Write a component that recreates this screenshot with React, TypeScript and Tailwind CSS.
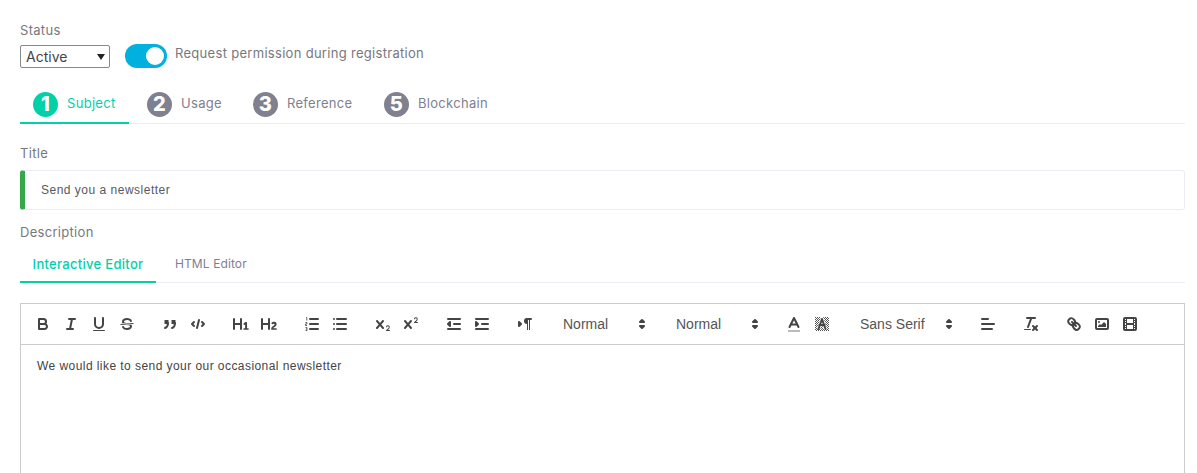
import type { ReactNode } from 'react'

const sf = 'fill-[#444] stroke-none'
const st = 'fill-none stroke-[#444] stroke-2 [stroke-linecap:round] [stroke-linejoin:round]'

function Ico({ children }: { children: ReactNode }) {
  return (
    <span className="flex h-6 w-7 shrink-0 items-center justify-center">
      <svg viewBox="0 0 18 18" className="h-[18px] w-[18px]">{children}</svg>
    </span>
  )
}

function Group({ children }: { children: ReactNode }) {
  return <div className="mr-[15px] flex shrink-0 items-center">{children}</div>
}

function Picker({ label, width }: { label: string; width: string }) {
  return (
    <div className={`mr-[15px] flex h-6 shrink-0 items-center justify-between pl-[9px] pr-px ${width}`}>
      <span className="font-['Liberation_Sans',sans-serif] text-sm tracking-normal text-[#555]">{label}</span>
      <svg viewBox="0 0 18 18" className="h-[18px] w-[18px]">
        <polygon className={st} points="7 11 9 13 11 11 7 11" />
        <polygon className={st} points="7 7 9 5 11 7 7 7" />
      </svg>
    </div>
  )
}

function Toolbar() {
  return (
    <div className="flex h-[42px] items-center border border-[#ccc] pl-2">
      <Group>
        <Ico>
          <path className={st} d="M5,4H9.5A2.5,2.5,0,0,1,12,6.5v0A2.5,2.5,0,0,1,9.5,9H5A0,0,0,0,1,5,9V4A0,0,0,0,1,5,4Z" />
          <path className={st} d="M5,9h5.5A2.5,2.5,0,0,1,13,11.5v0A2.5,2.5,0,0,1,10.5,14H5a0,0,0,0,1,0,0V9A0,0,0,0,1,5,9Z" />
        </Ico>
        <Ico>
          <line className={st} x1="7" x2="13" y1="4" y2="4" />
          <line className={st} x1="5" x2="11" y1="14" y2="14" />
          <line className={st} x1="8" x2="10" y1="14" y2="4" />
        </Ico>
        <Ico>
          <path className={st} d="M5,3V9a4.012,4.012,0,0,0,4,4H9a4.012,4.012,0,0,0,4-4V3" />
          <rect className={sf} height="1" rx=".5" ry=".5" width="12" x="3" y="15" />
        </Ico>
        <Ico>
          <line className="fill-none stroke-[#444] stroke-1" x1="15.5" x2="2.5" y1="8.5" y2="9.5" />
          <path className={sf} d="M9.007,8C6.542,7.791,6,7.519,6,6.5,6,5.792,7.283,5,9,5c1.571,0,2.765.679,2.969,1.309a1,1,0,0,0,1.9-.617C13.356,4.106,11.354,3,9,3,6.2,3,4,4.538,4,6.5a3.2,3.2,0,0,0,.5,1.843Z" />
          <path className={sf} d="M8.984,10C11.457,10.208,12,10.479,12,11.5c0,.708-1.283,1.5-3,1.5-1.571,0-2.765-.679-2.969-1.309a1,1,0,1,0-1.9.617C4.644,13.894,6.646,15,9,15c2.8,0,5-1.538,5-3.5a3.2,3.2,0,0,0-.5-1.843Z" />
        </Ico>
      </Group>
      <Group>
        <Ico>
          <rect className={sf} height="4" width="4" x="3.5" y="5" />
          <rect className={sf} height="4" width="4" x="10.5" y="5" />
          <path className={st} d="M7,8c0,4.031-3,5-3,5" />
          <path className={st} d="M14,8c0,4.031-3,5-3,5" />
        </Ico>
        <Ico>
          <polyline className={st} points="5 7 3 9 5 11" />
          <polyline className={st} points="13 7 15 9 13 11" />
          <line className={st} x1="10" x2="8" y1="5" y2="13" />
        </Ico>
      </Group>
      <Group>
        <Ico>
          <path className={sf} d="M10,4V14a1,1,0,0,1-2,0V10H3v4a1,1,0,0,1-2,0V4A1,1,0,0,1,3,4V8H8V4a1,1,0,0,1,2,0Zm6.06787,9.209H14.98975V7.59863a.54085.54085,0,0,0-.605-.60547h-.62744a1.01119,1.01119,0,0,0-.748.29688L11.645,8.56641a.5435.5435,0,0,0-.022.8584l.28613.30762a.53861.53861,0,0,0,.84717.0332l.09912-.08789a1.2137,1.2137,0,0,0,.2417-.35254h.02246s-.01123.30859-.01123.60547V13.209H12.041a.54085.54085,0,0,0-.605.60547v.43945a.54085.54085,0,0,0,.605.60547h4.02686a.54085.54085,0,0,0,.605-.60547v-.43945A.54085.54085,0,0,0,16.06787,13.209Z" />
        </Ico>
        <Ico>
          <path className={sf} d="M16.73975,13.81445v.43945a.54085.54085,0,0,1-.605.60547H11.855a.58392.58392,0,0,1-.64893-.60547V14.0127c0-2.90527,3.39941-3.42187,3.39941-4.55469a.77675.77675,0,0,0-.84717-.78125,1.17684,1.17684,0,0,0-.83594.38477c-.2749.26367-.561.374-.85791.13184l-.4292-.34082c-.30811-.24219-.38525-.51758-.1543-.81445a2.97155,2.97155,0,0,1,2.45361-1.17676,2.45393,2.45393,0,0,1,2.68408,2.40918c0,2.45312-3.1792,2.92676-3.27832,3.93848h2.79443A.54085.54085,0,0,1,16.73975,13.81445ZM9,3A.99974.99974,0,0,0,8,4V8H3V4A1,1,0,0,0,1,4V14a1,1,0,0,0,2,0V10H8v4a1,1,0,0,0,2,0V4A.99974.99974,0,0,0,9,3Z" />
        </Ico>
      </Group>
      <Group>
        <Ico>
          <line className={st} x1="7" x2="15" y1="4" y2="4" />
          <line className={st} x1="7" x2="15" y1="9" y2="9" />
          <line className={st} x1="7" x2="15" y1="14" y2="14" />
          <path className="fill-none stroke-[#444] stroke-[0.8]" d="M3,2.5h.8v3M2.5,7.5h1.5v1.5h-1.5v1.5h1.5M2.5,12.5h1.5v3h-1.5M2.8,14h1.2" />
        </Ico>
        <Ico>
          <line className={st} x1="6" x2="15" y1="4" y2="4" />
          <line className={st} x1="6" x2="15" y1="9" y2="9" />
          <line className={st} x1="6" x2="15" y1="14" y2="14" />
          <line className={st} x1="3" x2="3" y1="4" y2="4" />
          <line className={st} x1="3" x2="3" y1="9" y2="9" />
          <line className={st} x1="3" x2="3" y1="14" y2="14" />
        </Ico>
      </Group>
      <Group>
        <Ico>
          <path className={sf} d="M15.5,15H13.861a3.858,3.858,0,0,0,1.914-2.975,1.8,1.8,0,0,0-1.6-1.751A1.921,1.921,0,0,0,12.021,11.7a0.50013,0.50013,0,1,0,.957.291h0a0.914,0.914,0,0,1,1.053-.725,0.81,0.81,0,0,1,.744.762c0,1.076-1.16971,1.86982-1.93971,2.43082A1.45639,1.45639,0,0,0,12,15.5a0.5,0.5,0,0,0,.5.5h3A0.5,0.5,0,0,0,15.5,15Z" />
          <path className={sf} d="M9.65,5.241a1,1,0,0,0-1.409.108L6,7.964,3.759,5.349A1,1,0,0,0,2.192,6.59178Q2.21541,6.6213,2.241,6.649L4.684,9.5,2.241,12.35A1,1,0,0,0,3.71,13.70722q0.02557-.02768.049-0.05722L6,11.036,8.241,13.65a1,1,0,1,0,1.567-1.24277Q9.78459,12.3777,9.759,12.35L7.316,9.5,9.759,6.651A1,1,0,0,0,9.65,5.241Z" />
        </Ico>
        <Ico>
          <path className={sf} d="M15.5,7H13.861a4.015,4.015,0,0,0,1.914-2.975,1.8,1.8,0,0,0-1.6-1.751A1.922,1.922,0,0,0,12.021,3.7a0.5,0.5,0,1,0,.957.291,0.917,0.917,0,0,1,1.053-.725,0.81,0.81,0,0,1,.744.762c0,1.077-1.164,1.925-1.934,2.486A1.423,1.423,0,0,0,12,7.5a0.5,0.5,0,0,0,.5.5h3A0.5,0.5,0,0,0,15.5,7Z" />
          <path className={sf} d="M9.651,5.241a1,1,0,0,0-1.41.108L6,7.964,3.759,5.349a1,1,0,1,0-1.519,1.3L4.683,9.5,2.241,12.35a1,1,0,1,0,1.519,1.3L6,11.036,8.241,13.65a1,1,0,0,0,1.519-1.3L7.317,9.5,9.759,6.651A1,1,0,0,0,9.651,5.241Z" />
        </Ico>
      </Group>
      <Group>
        <Ico>
          <line className={st} x1="3" x2="15" y1="14" y2="14" />
          <line className={st} x1="3" x2="15" y1="4" y2="4" />
          <line className={st} x1="9" x2="15" y1="9" y2="9" />
          <polyline className={`${st} fill-[#444]`} points="5 7 5 11 3 9 5 7" />
        </Ico>
        <Ico>
          <line className={st} x1="3" x2="15" y1="14" y2="14" />
          <line className={st} x1="3" x2="15" y1="4" y2="4" />
          <line className={st} x1="9" x2="15" y1="9" y2="9" />
          <polyline className={`${st} fill-[#444]`} points="3 7 3 11 5 9 3 7" />
        </Ico>
      </Group>
      <Group>
        <Ico>
          <polygon className={`${st} fill-[#444]`} points="3 11 5 9 3 7 3 11" />
          <line className={st} x1="15" x2="11" y1="4" y2="4" />
          <path className={sf} d="M11,3a3,3,0,0,0,0,6h1V3H11Z" />
          <rect className={sf} height="11" width="1" x="11" y="4" />
          <rect className={sf} height="11" width="1" x="13" y="4" />
        </Ico>
      </Group>
      <Picker label="Normal" width="w-[98px]" />
      <Picker label="Normal" width="w-[98px]" />
      <Group>
        <Ico>
          <line className="fill-none stroke-[#bbb] stroke-2" x1="3" x2="15" y1="16" y2="16" />
          <polyline className={st} points="4.5 12 9 3 13.5 12" />
          <line className={st} x1="12" x2="6" y1="9.5" y2="9.5" />
        </Ico>
        <Ico>
          <defs>
            <pattern id="dots" width="2" height="2" patternUnits="userSpaceOnUse">
              <rect width="1" height="1" fill="#555" />
              <rect x="1" y="1" width="1" height="1" fill="#555" />
            </pattern>
          </defs>
          <rect x="2" y="2" width="14" height="14" fill="url(#dots)" />
          <polyline className="fill-none stroke-white stroke-[3.5]" points="5.5 14 9 4 12.5 14" />
          <polyline className={st} points="5.5 14 9 4 12.5 14" />
          <line className={st} x1="11.63" x2="6.38" y1="10" y2="10" />
        </Ico>
      </Group>
      <Picker label="Sans Serif" width="w-[108px]" />
      <Group>
        <Ico>
          <line className={st} x1="3" x2="15" y1="9" y2="9" />
          <line className={st} x1="3" x2="13" y1="14" y2="14" />
          <line className={st} x1="3" x2="9" y1="4" y2="4" />
        </Ico>
      </Group>
      <Group>
        <Ico>
          <line className={st} x1="5" x2="13" y1="3" y2="3" />
          <line className={st} x1="6" x2="9.35" y1="12" y2="3" />
          <line className={st} x1="11" x2="15" y1="11" y2="15" />
          <line className={st} x1="15" x2="11" y1="11" y2="15" />
          <rect className={sf} height="1" rx=".5" ry=".5" width="7" x="2" y="14" />
        </Ico>
      </Group>
      <Group>
        <Ico>
          <line className={st} x1="7" x2="11" y1="7" y2="11" />
          <path className={st} d="M8.9,4.577a3.476,3.476,0,0,1,.36,4.679A3.476,3.476,0,0,1,4.577,8.9C3.185,7.5,2.035,6.4,4.217,4.217S7.5,3.185,8.9,4.577Z" />
          <path className={st} d="M13.423,9.1a3.476,3.476,0,0,0-4.679-.36,3.476,3.476,0,0,0,.36,4.679c1.392,1.392,2.5,2.542,4.679.36S14.815,10.5,13.423,9.1Z" />
        </Ico>
        <Ico>
          <rect className={st} height="10" width="12" x="3" y="4" rx="1" ry="1" />
          <circle className={sf} cx="6" cy="7" r="1" />
          <polyline className={sf} points="5 12 5 11 7 9 8 10 11 7 13 9 13 12 5 12" />
        </Ico>
        <Ico>
          <rect className={st} height="12" width="12" x="3" y="3" rx="1" ry="1" />
          <rect className={sf} height="12" width="1" x="5" y="3" />
          <rect className={sf} height="12" width="1" x="12" y="3" />
          <rect className={sf} height="2" width="8" x="5" y="8" />
          <rect className={sf} height="1" width="3" x="3" y="5" />
          <rect className={sf} height="1" width="3" x="3" y="7" />
          <rect className={sf} height="1" width="3" x="3" y="10" />
          <rect className={sf} height="1" width="3" x="3" y="12" />
          <rect className={sf} height="1" width="3" x="12" y="5" />
          <rect className={sf} height="1" width="3" x="12" y="7" />
          <rect className={sf} height="1" width="3" x="12" y="10" />
          <rect className={sf} height="1" width="3" x="12" y="12" />
        </Ico>
      </Group>
    </div>
  )
}

function StepTab({ n, label, active, width }: { n: string; label: string; active?: boolean; width: string }) {
  return (
    <div className={`-mb-px flex h-[40px] items-center border-b-2 pl-[13px] pt-[2px] ${width} ${active ? 'border-[#00d1a8] text-[#00d1a8]' : 'border-transparent text-[#7f8090]'}`}>
      <span className={`mr-[9px] flex h-[25px] w-[25px] items-center justify-center rounded-full text-[20px] font-extrabold text-white ${active ? 'bg-[#00d1a8]' : 'bg-[#7f8090]'}`}>
        {n}
      </span>
      <span className="text-[13px] tracking-[0.3px]">{label}</span>
    </div>
  )
}

export default function App() {
  return (
    <div className="h-[473px] w-[1197px] overflow-hidden bg-white pl-5 font-['Inter',sans-serif] text-[13px] tracking-[0.3px] text-[#77787c]">
      <div className="w-[1165px]">
        <div className="pt-[21px] leading-[18px]">Status</div>
        <div className="mt-[5px] flex items-start">
          <div className="relative mt-[1px] h-[23px] w-[90px]">
            <select className="h-full w-full appearance-none rounded-[2px] border border-[#8a8a8a] bg-white pl-[5px] text-[14px] tracking-normal text-[#444]">
              <option>Active</option>
            </select>
            <svg viewBox="0 0 8 6" className="absolute right-[5px] top-[9px] h-[6px] w-2">
              <polygon points="0 0 8 0 4 6" fill="#222" />
            </svg>
          </div>
          <div className="ml-[15px] flex h-6 w-[42px] items-center justify-end rounded-full bg-[#00b0de] pr-[3px]">
            <div className="h-[18px] w-[18px] rounded-full bg-white" />
          </div>
          <span className="ml-2 leading-[18px]">Request permission during registration</span>
        </div>

        <div className="mt-[16px] flex border-b border-[#ebedf2]">
          <StepTab n="1" label="Subject" active width="mr-[5px] w-[109px]" />
          <StepTab n="2" label="Usage" width="w-[106px]" />
          <StepTab n="3" label="Reference" width="w-[131px]" />
          <StepTab n="5" label="Blockchain" width="w-[130px]" />
        </div>

        <div className="mt-[20px] leading-[18px]">Title</div>
        <div className="mt-[8px] flex h-10 items-center rounded-[3px] border border-[#ebedf2] border-l-[5px] border-l-[#34a84a] pl-4 font-['Liberation_Sans',sans-serif] text-xs tracking-[0.5px] text-[#575962]">
          Send you a newsletter
        </div>

        <div className="mt-[13px] leading-[18px]">Description</div>
        <div className="mt-[10px] flex border-b border-[#ebedf2] text-[13px]">
          <div className="-mb-px flex h-[32px] w-[136px] items-start justify-center border-b-2 border-[#00d1a8] pt-[4px] font-medium text-[#00d1a8]">Interactive Editor</div>
          <div className="flex h-[31px] items-start pl-[19px] pt-[4px] text-[12px] tracking-[0.1px] text-[#7f8090]">HTML Editor</div>
        </div>

        <div className="mt-5">
          <Toolbar />
          <div className="h-[200px] border border-t-0 border-[#ccc] pl-4 pr-[15px] pt-3 font-['Liberation_Sans',sans-serif] text-xs leading-[18px] tracking-[0.44px] text-[#444]">
            We would like to send your our occasional newsletter
          </div>
        </div>
      </div>
    </div>
  )
}
